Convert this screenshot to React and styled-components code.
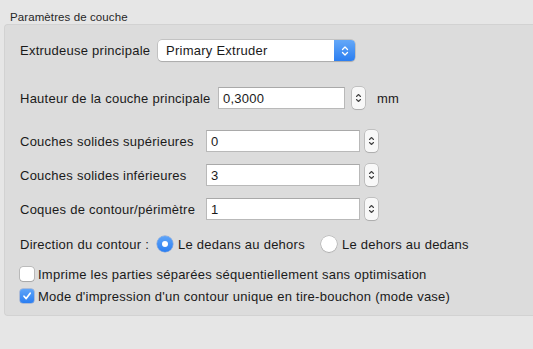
import React from "react";
import styled, { createGlobalStyle } from "styled-components";

const Global = createGlobalStyle`
  html, body { margin: 0; padding: 0; background: #e6e6e6; }
  body { font-family: "Liberation Sans", Arial, sans-serif; color: #1a1a1a; }
  * { box-sizing: border-box; }
`;

const Page = styled.div`
  width: 533px;
  height: 349px;
  background: #e6e6e6;
  overflow: hidden;
`;

const Title = styled.div`
  height: 24px;
  padding: 11px 0 0 10px;
  font-size: 11.5px;
  line-height: 13px;
  letter-spacing: 0.1px;
  color: #262626;
`;

const Panel = styled.div`
  margin-left: 4px;
  background: #dcdcdc;
  border: 1px solid #d2d2d2;
  border-right: none;
  border-radius: 4px 0 0 4px;
  padding: 15px 0 10px 15px;
  display: flex;
  flex-direction: column;
`;

const Row = styled.div`
  display: flex;
  align-items: center;
  height: ${(p) => p.h || 22}px;
  margin-top: ${(p) => p.mt || 0}px;
  font-size: 13px;
  letter-spacing: 0.25px;
`;

const Label = styled.span`
  width: ${(p) => p.w}px;
  flex: none;
  white-space: nowrap;
`;

const Select = styled.div`
  width: 197px;
  height: 21px;
  background: #fff;
  border-radius: 4px;
  box-shadow: 0 0 0 0.5px rgba(0, 0, 0, 0.22), 0 1px 1px rgba(0, 0, 0, 0.12);
  display: flex;
  align-items: center;
  overflow: hidden;
`;

const SelectText = styled.span`
  flex: 1;
  padding-left: 8px;
  font-size: 13px;
`;

const BlueStep = styled.div`
  width: 21px;
  height: 21px;
  background: linear-gradient(#64a8f8, #2b7ef1);
  display: flex;
  align-items: center;
  justify-content: center;
`;

const Input = styled.div`
  width: ${(p) => p.w}px;
  height: 22px;
  background: #fff;
  border: 1px solid #b9b9b9;
  border-top-color: #a9a9a9;
  padding-left: 4px;
  display: flex;
  align-items: center;
  font-size: 13px;
`;

const Stepper = styled.div`
  margin-left: ${(p) => p.ml || 5}px;
  width: 13px;
  height: 22px;
  background: #f8f8f8;
  border-radius: 4px;
  box-shadow: 0 0 0 0.5px rgba(0, 0, 0, 0.25), 0 1px 1px rgba(0, 0, 0, 0.1);
  display: flex;
  align-items: center;
  justify-content: center;
`;

const Unit = styled.span`
  margin-left: 12px;
`;

const RadioItem = styled.label`
  display: flex;
  align-items: center;
  gap: 5px;
  margin-right: 16px;
`;

const RadioDot = styled.span`
  width: 16px;
  height: 16px;
  border-radius: 50%;
  flex: none;
  display: flex;
  align-items: center;
  justify-content: center;
  background: ${(p) => (p.on ? "linear-gradient(#5ea4f8, #2b7ef1)" : "#fff")};
  box-shadow: ${(p) =>
    p.on
      ? "0 0 0 0.5px rgba(30,90,200,0.5)"
      : "0 0 0 0.5px rgba(0,0,0,0.25), 0 1px 1px rgba(0,0,0,0.1)"};
  &::after {
    content: "";
    display: ${(p) => (p.on ? "block" : "none")};
    width: 6px;
    height: 6px;
    border-radius: 50%;
    background: #fff;
  }
`;

const Check = styled.span`
  width: 14px;
  height: 14px;
  border-radius: 3px;
  flex: none;
  margin-right: 4px;
  display: flex;
  align-items: center;
  justify-content: center;
  background: ${(p) => (p.on ? "linear-gradient(#5ea4f8, #2b7ef1)" : "#fff")};
  box-shadow: ${(p) =>
    p.on
      ? "0 0 0 0.5px rgba(30,90,200,0.5)"
      : "0 0 0 0.5px rgba(0,0,0,0.3), 0 1px 1px rgba(0,0,0,0.1)"};
`;

const Chevrons = ({ color = "#fff", w = 8 }) => (
  <svg width={w} height="12" viewBox="0 0 8 12">
    <path d="M1.5 4.5 L4 2 L6.5 4.5" fill="none" stroke={color} strokeWidth="1.3" strokeLinecap="round" strokeLinejoin="round" />
    <path d="M1.5 7.5 L4 10 L6.5 7.5" fill="none" stroke={color} strokeWidth="1.3" strokeLinecap="round" strokeLinejoin="round" />
  </svg>
);

const SmallChevrons = () => (
  <svg width="7" height="12" viewBox="0 0 7 12">
    <path d="M1.5 4.5 L3.5 2.5 L5.5 4.5" fill="none" stroke="#444" strokeWidth="1.1" strokeLinecap="round" strokeLinejoin="round" />
    <path d="M1.5 7.5 L3.5 9.5 L5.5 7.5" fill="none" stroke="#444" strokeWidth="1.1" strokeLinecap="round" strokeLinejoin="round" />
  </svg>
);

const Tick = () => (
  <svg width="10" height="10" viewBox="0 0 10 10">
    <path d="M2 5.2 L4.2 7.6 L8.2 2.2" fill="none" stroke="#fff" strokeWidth="1.7" strokeLinecap="round" strokeLinejoin="round" />
  </svg>
);

const NumRow = ({ label, value, mt }) => (
  <Row mt={mt}>
    <Label w={186}>{label}</Label>
    <Input w={154}>{value}</Input>
    <Stepper>
      <SmallChevrons />
    </Stepper>
  </Row>
);

export default function App() {
  return (
    <Page>
      <Global />
      <Title>Paramètres de couche</Title>
      <Panel>
        <Row h={21}>
          <Label w={138}>Extrudeuse principale</Label>
          <Select>
            <SelectText>Primary Extruder</SelectText>
            <BlueStep>
              <Chevrons />
            </BlueStep>
          </Select>
        </Row>
        <Row mt={26}>
          <Label w={198}>Hauteur de la couche principale</Label>
          <Input w={127}>0,3000</Input>
          <Stepper ml={7}>
            <SmallChevrons />
          </Stepper>
          <Unit>mm</Unit>
        </Row>
        <NumRow mt={21} label="Couches solides supérieures" value="0" />
        <NumRow mt={12} label="Couches solides inférieures" value="3" />
        <NumRow mt={12} label="Coques de contour/périmètre" value="1" />
        <Row mt={15} h={18}>
          <Label w={137}>Direction du contour :</Label>
          <RadioItem>
            <RadioDot on />
            Le dedans au dehors
          </RadioItem>
          <RadioItem>
            <RadioDot />
            Le dehors au dedans
          </RadioItem>
        </Row>
        <Row mt={12} h={18}>
          <Check />
          Imprime les parties séparées séquentiellement sans optimisation
        </Row>
        <Row mt={4} h={18}>
          <Check on>
            <Tick />
          </Check>
          Mode d'impression d'un contour unique en tire-bouchon (mode vase)
        </Row>
      </Panel>
    </Page>
  );
}
